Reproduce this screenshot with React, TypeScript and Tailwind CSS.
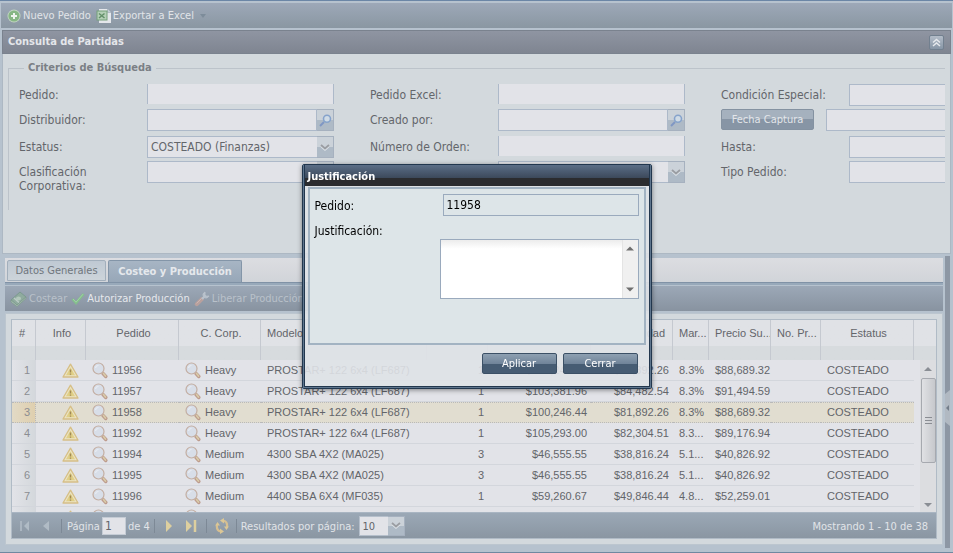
import React from "react";

type Row = {
  id: string;
  corp: string;
  model: string;
  qty: string;
  price: string;
  cost: string;
  margin: string;
  suggested: string;
};

const rows: Row[] = [
  { id: "11956", corp: "Heavy", model: "PROSTAR+ 122 6x4 (LF687)", qty: "1", price: "$100,246.44", cost: "$81,892.26", margin: "8.3%", suggested: "$88,689.32" },
  { id: "11957", corp: "Heavy", model: "PROSTAR+ 122 6x4 (LF687)", qty: "1", price: "$103,381.96", cost: "$84,482.54", margin: "8.3%", suggested: "$91,494.59" },
  { id: "11958", corp: "Heavy", model: "PROSTAR+ 122 6x4 (LF687)", qty: "1", price: "$100,246.44", cost: "$81,892.26", margin: "8.3%", suggested: "$88,689.32" },
  { id: "11992", corp: "Heavy", model: "PROSTAR+ 122 6x4 (LF687)", qty: "1", price: "$105,293.00", cost: "$82,304.51", margin: "8.3...", suggested: "$89,176.94" },
  { id: "11994", corp: "Medium", model: "4300 SBA 4X2 (MA025)", qty: "3", price: "$46,555.55", cost: "$38,816.24", margin: "5.1...", suggested: "$40,826.92" },
  { id: "11995", corp: "Medium", model: "4300 SBA 4X2 (MA025)", qty: "3", price: "$46,555.55", cost: "$38,816.24", margin: "5.1...", suggested: "$40,826.92" },
  { id: "11996", corp: "Medium", model: "4400 SBA 6X4 (MF035)", qty: "1", price: "$59,260.67", cost: "$49,846.44", margin: "4.8...", suggested: "$52,259.01" },
];

function AddIcon() {
  return (
    <svg width="14" height="14" viewBox="0 0 14 14" aria-hidden="true">
      <circle cx="7" cy="7" r="6.500" fill="#c3d6c4" />
      <circle cx="7" cy="7" r="5.600" fill="#86b684" />
      <path d="M7 4v6M4 7h6" stroke="#eef3ee" strokeWidth="2" />
    </svg>
  );
}

function ExcelIcon() {
  return (
    <svg width="16" height="16" viewBox="0 0 16 16" aria-hidden="true">
      <path d="M3 1h8.500L15 4.500V15H3z" fill="#e4e7eb" />
      <path d="M11.500 1v3.500H15" fill="#c3ccd5" stroke="#aab5bf" strokeWidth=".8" />
      <rect x="1" y="3" width="10" height="9" fill="#b4cfb7" stroke="#74a07a" />
      <path d="M3 5.500l5.500 4.500M8.500 5.500L3 10" stroke="#628f69" strokeWidth="1.500" />
    </svg>
  );
}

function MoneyIcon() {
  return (
    <svg width="17" height="16" viewBox="0 0 17 16" aria-hidden="true">
      <path d="M1 9l9-8 6 5-9 8z" fill="#8fab9e" stroke="#76958a" strokeWidth=".8" />
      <path d="M1 9v2l6 4.500 9-8V6l-9 8z" fill="#a9bfb3" stroke="#7b998a" strokeWidth=".7" />
      <ellipse cx="8.500" cy="7.500" rx="2.500" ry="2" fill="#b3c8bc" />
      <path d="M4 7l5 4.500" stroke="#bccbc6" strokeWidth="1.500" />
    </svg>
  );
}

function CheckIcon() {
  return (
    <svg width="14" height="13" viewBox="0 0 14 13" aria-hidden="true">
      <path d="M1.500 7l3.500 4 7.500-9" fill="none" stroke="#84bd8d" strokeWidth="2.600" />
      <path d="M2 7l3 3.200 7-8" fill="none" stroke="#a0d3a4" strokeWidth="1" />
    </svg>
  );
}

function WrenchIcon() {
  return (
    <svg width="16" height="16" viewBox="0 0 16 16" aria-hidden="true">
      <path d="M2.800 13.200l5-5" stroke="#b9a09d" strokeWidth="4" strokeLinecap="round" />
      <path d="M2.500 12.500l5-5" stroke="#cbb6b1" strokeWidth="1" />
      <path d="M8 8l3-3" stroke="#b9c2cc" strokeWidth="2.400" />
      <path d="M11 1c-2.200 1-2.500 3.200-1.200 4.800S13.500 7.500 15 5l-2.600.3L11 3.500z" fill="#b9c2cc" stroke="#b9c2cc" />
    </svg>
  );
}

function LensIcon() {
  return (
    <svg width="16" height="17" viewBox="0 0 16 17" aria-hidden="true">
      <path d="M11 11.500l2.800 3" stroke="#bd9b8d" strokeWidth="3.400" strokeLinecap="round" />
      <path d="M11.500 11.500l2 2.500" stroke="#d8cba8" strokeWidth="1.800" strokeLinecap="round" />
      <circle cx="6.500" cy="6.500" r="5.500" fill="#d8dee8" stroke="#c3aea2" strokeWidth="1.200" />
      <path d="M3.500 6a3 3 0 0 1 3-2.500" fill="none" stroke="#e8ecf2" strokeWidth="1.200" />
    </svg>
  );
}

function WarnIcon() {
  return (
    <svg width="17" height="15" viewBox="0 0 17 15" aria-hidden="true">
      <path d="M8.500 1.200L16 14H1z" fill="#ebe3c4" stroke="#d6bf86" strokeWidth="1.300" strokeLinejoin="round" />
      <path d="M8.500 4.500L13 12.300H4z" fill="#e0cf86" />
      <path d="M8.500 6.500v3M8.500 10.500v1.300" stroke="#a18a55" strokeWidth="1.400" />
    </svg>
  );
}

function BlueLens() {
  return (
    <svg width="13" height="13" viewBox="0 0 13 13" aria-hidden="true">
      <path d="M1 12l4-4" stroke="#7f97c4" strokeWidth="2" />
      <circle cx="8" cy="4.800" r="3.500" fill="#cfdbe6" stroke="#86a3cb" strokeWidth="1.600" />
    </svg>
  );
}

function Chevron() {
  return (
    <svg width="10" height="7" viewBox="0 0 10 7" aria-hidden="true">
      <path d="M1 2.500L5 6l4-3.500" fill="none" stroke="#dfe4e9" strokeWidth="1.500" />
      <path d="M1 1l4 3.500L9 1" fill="none" stroke="#9a9da2" strokeWidth="1.800" />
    </svg>
  );
}

function RefreshIcon() {
  return (
    <svg width="14" height="16" viewBox="0 0 14 16" aria-hidden="true">
      <path d="M6 13.500C3 13 1.500 10.500 2 7" fill="none" stroke="#d6bf91" strokeWidth="2.200" />
      <path d="M5 10.500l4 3-4 2.500zM.2 7.500L2.500 4 5 7.500z" fill="#dcc795" />
      <path d="M8 2.500c3 .5 4.500 3 4 6.500" fill="none" stroke="#d6bf91" strokeWidth="2.200" />
      <path d="M9 5.500l-4-3L9 0zM13.800 8.500L11.500 12 9 8.500z" fill="#dcc795" />
    </svg>
  );
}

const fieldBase = "bg-[#e2e3e8] border-[#adb9c9] outline-none text-[#63666b] text-xs";
const triggerBox =
  "flex items-center justify-center border border-l-0 border-[#a6b1bf] bg-linear-to-b from-[#cbd2d9] from-50% to-[#aebac6] to-50%";

function Label({ htmlFor, children }: { htmlFor: string; children: React.ReactNode }) {
  return (
    <label htmlFor={htmlFor} className="w-32 shrink-0 pt-1 pr-4 leading-[14px]">
      {children}
    </label>
  );
}

function TextField({ id, label }: { id: string; label: string }) {
  return (
    <div className="flex items-start">
      <Label htmlFor={id}>{label}</Label>
      <input id={id} className={`${fieldBase} h-5 w-[187px] border-x px-1`} />
    </div>
  );
}

function BoxField({ id, label }: { id: string; label: string }) {
  return (
    <div className="flex items-start">
      <Label htmlFor={id}>{label}</Label>
      <input id={id} className={`${fieldBase} h-[22px] w-[187px] border px-1`} />
    </div>
  );
}

function SearchField({ id, label }: { id: string; label: string }) {
  return (
    <div className="flex items-start">
      <Label htmlFor={id}>{label}</Label>
      <input id={id} className={`${fieldBase} h-[22px] w-[170px] border px-1`} />
      <button type="button" aria-label={`Buscar ${label}`} className={`${triggerBox} h-[22px] w-[17px]`}>
        <BlueLens />
      </button>
    </div>
  );
}

function SelectField({ id, label, value }: { id: string; label: string; value: string }) {
  return (
    <div className="flex items-start">
      <Label htmlFor={id}>{label}</Label>
      <div className="relative">
        <select id={id} className={`${fieldBase} block h-[22px] w-[187px] appearance-none border pr-5 pl-[3px]`}>
          <option>{value}</option>
        </select>
        <span className={`${triggerBox} pointer-events-none absolute top-0 right-0 h-[22px] w-[17px]`}>
          <Chevron />
        </span>
      </div>
    </div>
  );
}

function SearchPanel() {
  return (
    <section className="mx-[2px] mt-[2px] h-56 shrink-0 border border-[#adb8c3] bg-[#d3d9dd]">
      <header className="-mx-px -mt-px flex h-6 items-center justify-between border border-[#7a828e] bg-linear-to-b from-[#8f95a2] to-[#7f8591] pr-[6px] pl-[5px]">
        <h1 className="pt-px text-[11px] font-bold text-[#e4e6ea]">Consulta de Partidas</h1>
        <button
          type="button"
          aria-label="Contraer panel"
          className="flex size-[15px] items-center justify-center rounded-xs border border-[#72808f] bg-linear-to-b from-[#b3bcc8] to-[#8796a6]"
        >
          <svg width="9" height="9" viewBox="0 0 9 9" aria-hidden="true">
            <path d="M1 4.500l3.500-3 3.500 3M1 8l3.500-3L8 8" fill="none" stroke="#e6e9ed" strokeWidth="1.500" />
          </svg>
        </button>
      </header>
      <fieldset className="mt-[7px] mr-[5px] ml-[5px] h-[149px] min-w-0 overflow-hidden border-t border-l border-[#bcc3ca] text-xs text-[#63666b]">
        <legend className="ml-[15px] px-1 text-[11px] leading-[14px] font-bold text-[#7b7f85]">Criterios de Búsqueda</legend>
        <div className="grid grid-cols-[351px_351px_351px] grid-rows-[25px_27px_25px_22px] pt-[9px] pl-[10px]">
          <TextField id="pedido" label="Pedido:" />
          <TextField id="pedido-excel" label="Pedido Excel:" />
          <BoxField id="condicion" label="Condición Especial:" />
          <SearchField id="distribuidor" label="Distribuidor:" />
          <SearchField id="creado" label="Creado por:" />
          <div className="flex items-start gap-3">
            <button
              type="button"
              className="h-[21px] w-[93px] rounded-xs border border-[#8492a1] bg-linear-to-b from-[#a5b1be] from-50% to-[#8795a5] to-50% pt-[2px] text-[11px] text-[#e3e6ea]"
            >
              Fecha Captura
            </button>
            <input aria-label="Fecha Captura" className={`${fieldBase} h-[22px] w-[187px] border px-1`} />
          </div>
          <SelectField id="estatus" label="Estatus:" value="COSTEADO (Finanzas)" />
          <TextField id="orden" label="Número de Orden:" />
          <BoxField id="hasta" label="Hasta:" />
          <SelectField id="clasificacion" label="Clasificación Corporativa:" value="" />
          <SelectField id="modelo" label="Modelo:" value="" />
          <BoxField id="tipo" label="Tipo Pedido:" />
        </div>
      </fieldset>
    </section>
  );
}

const thBase = "border-r border-[#c5c9d0] pb-[13px] font-normal overflow-hidden whitespace-nowrap";
const th = `${thBase} pl-[3px]`;
const thLeft = `${thBase} pl-[6px] text-left`;
const toolButton = "flex items-center gap-[2px] whitespace-nowrap";

function OrdersTable() {
  return (
    <div className="relative min-h-0 flex-1 overflow-hidden bg-[#e2e3e8]">
      <table className="w-full table-fixed border-separate border-spacing-0 font-['Liberation_Sans',Arial,sans-serif] text-[11px] text-[#63656a]">
        <colgroup>
          <col className="w-6" />
          <col className="w-[50px]" />
          <col className="w-[93px]" />
          <col className="w-[82px]" />
          <col />
          <col className="w-[61px]" />
          <col className="w-[103px]" />
          <col className="w-[82px]" />
          <col className="w-9" />
          <col className="w-[62px]" />
          <col className="w-[50px]" />
          <col className="w-[93px]" />
          <col className="w-[22px]" />
        </colgroup>
        <thead>
          <tr className="h-10 bg-linear-to-b from-[#e0e2e6] from-65% to-[#d7dbde] to-65%">
            <th className={`${thBase} pr-[3px]`}>#</th>
            <th className={th}>Info</th>
            <th className={th}>Pedido</th>
            <th className={th}>C. Corp.</th>
            <th className={thLeft}>Modelo</th>
            <th className={th}>Cant.</th>
            <th className={th}>Precio</th>
            <th className={`${thBase} pr-[7px] text-right`}>Utilidad</th>
            <th className={thLeft}>Mar...</th>
            <th className={thLeft}>Precio Su...</th>
            <th className={thLeft}>No. Pr...</th>
            <th className={th}>Estatus</th>
            <td />
          </tr>
        </thead>
        <tbody>
          {rows.map((r, i) => {
            const selected = i === 2;
            const line = selected
              ? "border-y border-dotted border-[#b9b9b9] bg-[#e1ddd0]"
              : "border-b border-[#d3d6dc]";
            return (
              <tr key={r.id} className="h-[21px] leading-[19px] whitespace-nowrap">
                <td
                  className={`${line} border-r pr-[5px] text-right text-[#8b8d92] ${selected ? "bg-linear-to-r from-[#e2dac6] to-[#dfcfae]" : "bg-linear-to-r from-[#e2e3e8] to-[#d4d8dc]"}`}
                >
                  {i + 1}
                </td>
                <td className={line}>
                  <span className="flex justify-end pr-[7px]">
                    <WarnIcon />
                  </span>
                </td>
                <td className={line}>
                  <span className="flex items-center gap-1 pl-[6px]">
                    <LensIcon />
                    {r.id}
                  </span>
                </td>
                <td className={line}>
                  <span className="flex items-center gap-1 pl-[6px]">
                    <LensIcon />
                    {r.corp}
                  </span>
                </td>
                <td className={`${line} pl-[6px]`}>{r.model}</td>
                <td className={`${line} pr-1 text-right`}>{r.qty}</td>
                <td className={`${line} pr-1 text-right`}>{r.price}</td>
                <td className={`${line} pr-1 text-right`}>{r.cost}</td>
                <td className={`${line} pl-[6px]`}>{r.margin}</td>
                <td className={`${line} pl-[6px]`}>{r.suggested}</td>
                <td className={line} />
                <td className={`${line} pl-[6px]`}>COSTEADO</td>
                <td />
              </tr>
            );
          })}
          <tr className="h-[21px]">
            <td className="border-r border-[#d3d6dc] bg-linear-to-r from-[#e2e3e8] to-[#d4d8dc]" />
            <td>
              <span className="flex justify-end pr-[7px]">
                <WarnIcon />
              </span>
            </td>
            <td>
              <span className="flex pl-[6px]">
                <LensIcon />
              </span>
            </td>
            <td>
              <span className="flex pl-[6px]">
                <LensIcon />
              </span>
            </td>
            <td colSpan={9} />
          </tr>
        </tbody>
      </table>
      <div className="absolute top-10 right-0 bottom-0 flex w-4 flex-col items-center bg-[#dcdde0]" aria-hidden="true">
        <svg width="8" height="18" viewBox="0 0 8 18">
          <path d="M0 11l4-4 4 4z" fill="#8a8e94" />
        </svg>
        <div className="flex h-[85px] w-[15px] flex-col items-center justify-center gap-[2px] rounded-xs border border-[#a6a9af] bg-linear-to-r from-[#e0e1e4] to-[#c6c8cc]">
          <span className="h-px w-[7px] bg-[#8a8d93]" />
          <span className="h-px w-[7px] bg-[#8a8d93]" />
          <span className="h-px w-[7px] bg-[#8a8d93]" />
        </div>
        <svg className="mt-auto" width="8" height="12" viewBox="0 0 8 12">
          <path d="M0 3l4 4 4-4z" fill="#8a8e94" />
        </svg>
      </div>
    </div>
  );
}

function Divider() {
  return <span className="h-[14px] w-px shrink-0 bg-[#7d8996]" />;
}

function Pager() {
  return (
    <footer className="flex h-[26px] shrink-0 items-center border-t border-[#a9b5c2] bg-linear-to-b from-[#9ba8b6] to-[#8a96a2] text-[11px] whitespace-nowrap text-[#e1e4e8]">
      <button type="button" aria-label="Primera página" className="ml-2">
        <svg width="11" height="10" viewBox="0 0 11 10">
          <path d="M1 0v10" stroke="#abb6c1" strokeWidth="2" />
          <path d="M9 0v10L4 5z" fill="#b0bbc5" />
        </svg>
      </button>
      <button type="button" aria-label="Página anterior" className="mr-3 ml-3">
        <svg width="6" height="10" viewBox="0 0 6 10">
          <path d="M6 0v10L0 5z" fill="#b0bbc5" />
        </svg>
      </button>
      <Divider />
      <label htmlFor="pagina" className="ml-[5px] pt-[3px]">
        Página
      </label>
      <input
        id="pagina"
        defaultValue="1"
        className="mx-[2px] h-[18px] w-6 border border-[#c5ccd5] bg-[#e2e3e8] px-[2px] text-xs text-[#63656a] outline-none"
      />
      <span className="mr-1 pt-[3px]">de 4</span>
      <Divider />
      <button type="button" aria-label="Página siguiente" className="ml-[11px]">
        <svg width="6" height="12" viewBox="0 0 6 12">
          <path d="M0 0v12l6-6z" fill="#ddcf9f" />
        </svg>
      </button>
      <button type="button" aria-label="Última página" className="mr-[9px] ml-[14px]">
        <svg width="11" height="12" viewBox="0 0 11 12">
          <path d="M0 0v12l6-6z" fill="#ddcf9f" />
          <path d="M9 0v12" stroke="#ddcf9f" strokeWidth="2.500" />
        </svg>
      </button>
      <Divider />
      <button type="button" aria-label="Actualizar" className="mr-[7px] ml-2">
        <RefreshIcon />
      </button>
      <Divider />
      <label htmlFor="por-pagina" className="mr-1 ml-1 pt-[3px]">
        Resultados por página:
      </label>
      <span className="relative">
        <select
          id="por-pagina"
          className="block h-5 w-[46px] appearance-none border border-[#b5bfcb] bg-[#e2e3e8] pt-[2px] pl-[3px] text-[11px] text-[#63656a] outline-none"
        >
          <option>10</option>
        </select>
        <span className={`${triggerBox} pointer-events-none absolute top-0 right-0 h-5 w-[17px]`}>
          <Chevron />
        </span>
      </span>
      <span className="mr-2 ml-auto pt-[3px]">Mostrando 1 - 10 de 38</span>
    </footer>
  );
}

function DetailPanel() {
  return (
    <section className="mt-[2px] flex min-h-0 flex-1 pb-1">
      <div className="ml-[5px] flex min-w-0 flex-1 flex-col pt-[2px] pb-[3px]">
        <div role="tablist" className="flex h-6 shrink-0 items-end gap-[2px] bg-linear-to-b from-[#dcdde1] to-[#d1d4d9] pl-[2px] text-[11px]">
          <button
            role="tab"
            type="button"
            aria-selected="false"
            className="mb-px h-[21px] w-[99px] rounded-t-xs border border-[#a2afbc] bg-linear-to-b from-[#bfc9d3] to-[#cdd4da] pt-[2px] text-[#70767d]"
          >
            Datos Generales
          </button>
          <button
            role="tab"
            type="button"
            aria-selected="true"
            className="h-[22px] w-[134px] rounded-t-xs border border-b-0 border-[#8395a8] bg-linear-to-b from-[#a7b5c4] to-[#97a7b8] pt-px font-bold text-[#e5e8ec]"
          >
            Costeo y Producción
          </button>
        </div>
        <div className="h-[3px] shrink-0 border-t border-[#8092a6] bg-[#98a9ba]" />
        <div className="mt-px flex h-[25px] shrink-0 items-center gap-1 bg-linear-to-b from-[#9ca8b7] to-[#8893a0] pl-[5px] text-[11px]">
          <button type="button" disabled className={`${toolButton} text-[#b9c1ca]`}>
            <MoneyIcon />
            <span className="pt-px">Costear</span>
          </button>
          <button type="button" className={`${toolButton} text-[#e6e8ec]`}>
            <CheckIcon />
            <span className="pt-px">Autorizar Producción</span>
          </button>
          <button type="button" disabled className={`${toolButton} text-[#b9c1ca]`}>
            <WrenchIcon />
            <span className="pt-px">Liberar Producción</span>
          </button>
        </div>
        <div className="mt-[2px] flex min-h-0 flex-1 flex-col border border-[#bcc6cf] bg-[#d3d9dd] p-[5px]">
          <div className="flex min-h-0 flex-1 flex-col border border-[#b0bbc6]">
            <OrdersTable />
            <Pager />
          </div>
        </div>
      </div>
      <button type="button" aria-label="Contraer panel derecho" className="mr-[3px] ml-[2px] flex w-[5px] items-center bg-[#8d97a4] pt-3">
        <svg width="5" height="36" viewBox="0 0 5 36" aria-hidden="true">
          <path d="M0 4l5-4v36l-5-4z" fill="#b1b9c2" />
          <path d="M4 15v6l-3-3z" fill="#747e8a" />
        </svg>
      </button>
    </section>
  );
}

function DialogButton({ children }: { children: React.ReactNode }) {
  return (
    <button
      type="button"
      className="h-[21px] w-[75px] rounded-xs border border-[#3b5066] bg-linear-to-b from-[#8ea0b2] from-0% via-[#71859a] via-50% to-[#465c73] to-50% pt-[2px] text-[11px] text-white"
    >
      {children}
    </button>
  );
}

function JustificationDialog() {
  return (
    <div className="fixed inset-0 grid place-items-center">
      <div
        role="dialog"
        aria-modal="true"
        aria-labelledby="dialog-title"
        className="w-[350px] rounded-xs border border-[#22374e] bg-[#dfe2e7]/90 shadow-[0_1px_5px_rgba(0,0,0,0.45)]"
      >
        <div className="border-x border-b border-[#5f768e]">
          <div className="border-x border-b border-[#22374e]">
            <h2
              id="dialog-title"
              className="h-[21px] bg-linear-to-b from-[#5b6e87] from-0% via-[#3d4a5c] via-60% to-[#2b2c2f] to-60% pl-[3px] text-[11px] leading-[23px] font-bold text-white"
            >
              Justificación
            </h2>
            <div className="mx-[3px] mt-px h-[158px] border-2 border-[#a2b3c2] bg-[#dde5e8] pt-[5px] pr-[5px] pl-[5px] text-xs text-black">
              <div className="flex justify-between">
                <label htmlFor="dlg-pedido" className="pt-1 leading-4">
                  Pedido:
                </label>
                <input
                  id="dlg-pedido"
                  readOnly
                  defaultValue="11958"
                  className="h-[22px] w-[196px] border border-[#9aaabd] bg-transparent px-[3px] outline-none"
                />
              </div>
              <label htmlFor="dlg-just" className="mt-[7px] block leading-4">
                Justificación:
              </label>
              <div className="flex justify-end">
                <div className="relative">
                  <textarea
                    id="dlg-just"
                    className="block h-[60px] w-[199px] resize-none border border-[#9aaabd] bg-linear-to-b from-[#ececec] to-white to-15% p-1 pr-5 outline-none"
                  />
                  <div className="absolute top-px right-px bottom-px flex w-4 flex-col items-center justify-between border-l border-[#e4e4e4] bg-[#f0f0f0] py-[6px]" aria-hidden="true">
                    <svg width="8" height="5" viewBox="0 0 8 5">
                      <path d="M0 4.500L4 .5l4 4z" fill="#6e6e6e" />
                    </svg>
                    <svg width="8" height="5" viewBox="0 0 8 5">
                      <path d="M0 .5l4 4 4-4z" fill="#6e6e6e" />
                    </svg>
                  </div>
                </div>
              </div>
            </div>
            <div className="flex justify-end gap-[6px] pt-2 pr-[11px] pb-3">
              <DialogButton>Aplicar</DialogButton>
              <DialogButton>Cerrar</DialogButton>
            </div>
          </div>
        </div>
      </div>
    </div>
  );
}

export default function App() {
  return (
    <div className="flex h-screen flex-col overflow-hidden border-y border-t-[#6b86a6] border-b-[#7088a0] bg-[#b6c2ce] pt-[2px] font-['DejaVu_Sans_Condensed','DejaVu_Sans',Tahoma,sans-serif]">
      <nav className="mx-px flex h-[25px] shrink-0 items-center gap-[5px] bg-linear-to-b from-[#9da8b8] to-[#8a97a2] pl-[6px] text-[11px] text-[#e1e4e8]">
        <button type="button" className="flex items-center gap-[2px]">
          <AddIcon />
          <span className="pt-px">Nuevo Pedido</span>
        </button>
        <button type="button" className="flex items-center">
          <ExcelIcon />
          <span className="mr-[6px] ml-px pt-px">Exportar a Excel</span>
          <svg width="6" height="4" viewBox="0 0 6 4" aria-hidden="true">
            <path d="M0 0h6L3 4z" fill="#7d8c9a" />
          </svg>
        </button>
      </nav>
      <SearchPanel />
      <DetailPanel />
      <JustificationDialog />
    </div>
  );
}
